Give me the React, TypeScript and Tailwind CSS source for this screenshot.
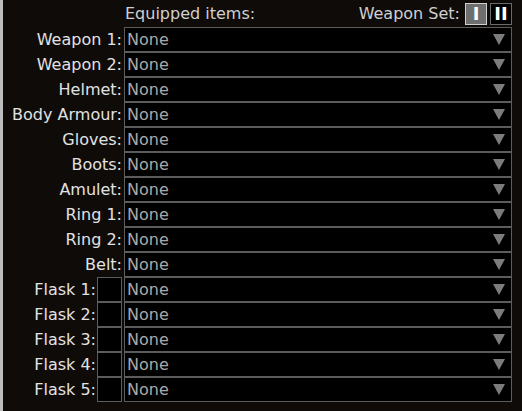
const slots = [
  "Weapon 1",
  "Weapon 2",
  "Helmet",
  "Body Armour",
  "Gloves",
  "Boots",
  "Amulet",
  "Ring 1",
  "Ring 2",
  "Belt",
];

const flasks = ["Flask 1", "Flask 2", "Flask 3", "Flask 4", "Flask 5"];

function Arrow() {
  return (
    <svg width="12" height="11" viewBox="0 0 12 11" className="shrink-0">
      <polygon points="0,0 12,0 6,11" fill="#7c7c7c" />
    </svg>
  );
}

function SlotSelect() {
  return (
    <div className="flex h-[25px] flex-1 items-center justify-between border border-[#5c5c5c] bg-black pl-[2px] pr-[6px] text-[#a9a9a9]">
      <span>None</span>
      <Arrow />
    </div>
  );
}

export default function App() {
  return (
    <div
      className="flex h-[411px] w-[522px] bg-[#0f0b09] text-[16px] leading-none"
      style={{ fontFamily: '"DejaVu Sans", sans-serif' }}
    >
      <div className="w-[3px] shrink-0 bg-[#bdbdbd]" />
      <div className="flex flex-1 flex-col pr-[10px]">
        <div className="flex h-[27px] items-center justify-between pl-[122px] pt-[1px] text-[#d0d0d0]">
          <span>Equipped items:</span>
          <div className="flex items-center">
            <span className="mr-[5px]">Weapon Set:</span>
            <div className="flex h-[22px] w-[22px] items-center justify-center border border-[#cfcfcf] bg-[#6e6e6e] text-[18px] font-bold text-white">
              I
            </div>
            <div className="ml-[3px] flex h-[22px] w-[22px] items-center justify-center border border-[#6a6a6a] bg-black text-[18px] font-bold text-white">
              II
            </div>
          </div>
        </div>
        {slots.map((s) => (
          <div key={s} className="flex h-[25px] items-center">
            <div className="w-[121px] shrink-0 pr-[2px] text-right text-[#e2e2e2]">
              {s}:
            </div>
            <SlotSelect />
          </div>
        ))}
        {flasks.map((s) => (
          <div key={s} className="flex h-[25px] items-center">
            <div className="w-[94px] shrink-0 pr-[1px] text-right text-[#e2e2e2]">
              {s}:
            </div>
            <div className="h-[25px] w-[25px] shrink-0 border border-[#5c5c5c] bg-black" />
            <div className="w-[2px] shrink-0" />
            <SlotSelect />
          </div>
        ))}
      </div>
    </div>
  );
}
